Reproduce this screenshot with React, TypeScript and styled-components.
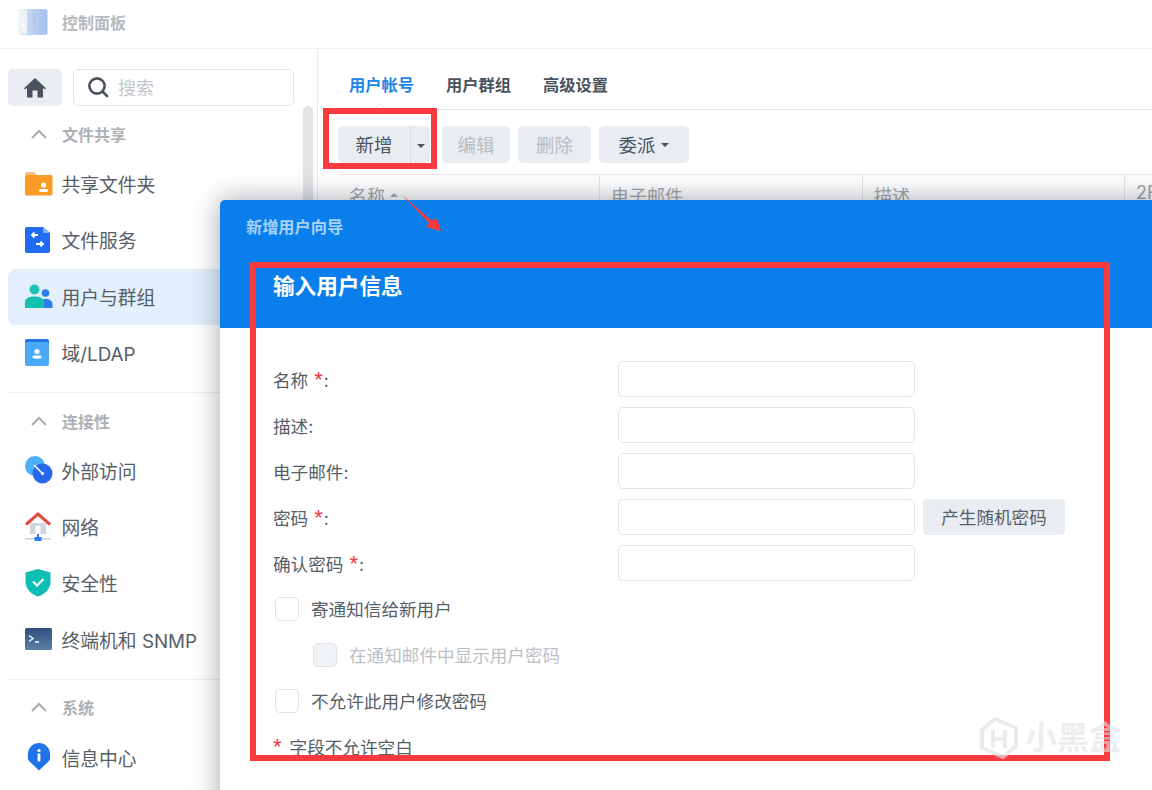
import styled, { createGlobalStyle } from "styled-components"

const GlobalStyle = createGlobalStyle`
  html, body {
    margin: 0;
    padding: 0;
    background: #fff;
  }
  * {
    box-sizing: border-box;
  }
`

const Page = styled.div`
  position: relative;
  width: 1152px;
  height: 790px;
  overflow: hidden;
  background: #fff;
  color: #4b535e;
  font-family: Inter, "Noto Sans CJK SC", "Noto Sans", sans-serif;
`

const TitleBar = styled.header`
  display: flex;
  align-items: center;
  gap: 14px;
  height: 49px;
  padding: 0 0 5px 18px;
  border-bottom: 1px solid #edeff2;
  font-size: 16px;
  font-weight: 700;
  color: #b6babf;
`

const Body = styled.div`
  display: flex;
  height: 741px;
`

const Sidebar = styled.aside`
  position: relative;
  flex: none;
  width: 318px;
  padding: 20px 23px 0 8px;
  border-right: 1px solid #e8ebee;
`

const ScrollThumb = styled.div`
  position: absolute;
  left: 303px;
  top: 57px;
  width: 10px;
  height: 300px;
  border-radius: 5px;
  background: #e2e3e5;
`

const SearchRow = styled.div`
  display: flex;
  gap: 11px;
  height: 37px;
  margin-bottom: 15px;
`

const HomeButton = styled.div`
  display: flex;
  align-items: center;
  justify-content: center;
  width: 54px;
  border-radius: 5px;
  background: #e9edf2;
`

const SearchBox = styled.div`
  flex: 1;
  display: flex;
  align-items: center;
  gap: 9px;
  padding: 0 0 1px 13px;
  border: 1px solid #e2e6ea;
  border-radius: 5px;
  font-size: 18px;
  color: #c2c6cb;
`

const SectionTitle = styled.div`
  display: flex;
  align-items: center;
  gap: 15px;
  height: 28px;
  margin-bottom: 7px;
  padding: 0 0 2px 23px;
  font-size: 16px;
  font-weight: 700;
  color: #adb1b6;
`

const NavItem = styled.div<{ $active?: boolean }>`
  display: flex;
  align-items: center;
  height: 56.3px;
  padding: 0 0 1px 17px;
  border-radius: 8px;
  font-size: 18.8px;
  white-space: nowrap;
  color: #565e68;
  background: ${(p) => (p.$active ? "#e3effc" : "transparent")};
`

const NavIcon = styled.span`
  display: flex;
  flex: none;
  width: 36.5px;
`

const Divider = styled.div`
  height: 1px;
  margin: 11px 0 14.5px;
  background: #eceef1;
`

const Main = styled.main`
  flex: 1;
  min-width: 0;
  padding-left: 19px;
`

const Tabs = styled.nav`
  position: relative;
  display: flex;
  align-items: center;
  gap: 32px;
  height: 61px;
  padding: 10px 0 0 12px;
  border-bottom: 1px solid #e3e6e9;
`

const Tab = styled.span<{ $active?: boolean }>`
  font-size: 16.25px;
  font-weight: 700;
  color: ${(p) => (p.$active ? "#1b86e8" : "#4b535e")};
`

const TabNotch = styled.span`
  position: absolute;
  left: 39px;
  bottom: -5px;
  width: 9px;
  height: 9px;
  background: #fff;
  border-left: 1px solid #e3e6e9;
  border-top: 1px solid #e3e6e9;
  transform: rotate(45deg);
`

const Toolbar = styled.div`
  display: flex;
  align-items: center;
  height: 37px;
  margin: 16px 0 11px 1px;
`

const SplitButton = styled.div`
  display: flex;
  width: 92px;
  height: 37px;
  margin-right: 12px;
  border-radius: 5px;
  background: #e9edf2;
`

const SplitLabel = styled.span`
  display: flex;
  align-items: center;
  justify-content: center;
  width: 73px;
  padding-bottom: 2px;
  border-right: 1px solid #d5d9de;
  font-size: 18.4px;
`

const SplitCaret = styled.span`
  flex: 1;
  display: flex;
  align-items: center;
  justify-content: center;
`

const ToolButton = styled.div<{ $width: number; $disabled?: boolean }>`
  display: flex;
  align-items: center;
  justify-content: center;
  gap: 6px;
  width: ${(p) => p.$width}px;
  height: 37px;
  margin-right: 8px;
  padding-bottom: 2px;
  border-radius: 5px;
  background: #e9edf2;
  font-size: 18.4px;
  color: ${(p) => (p.$disabled ? "#b7bcc2" : "#4b535e")};
`

const Caret = styled.i`
  display: block;
  width: 0;
  height: 0;
  margin-top: 2px;
  border-left: 4.5px solid transparent;
  border-right: 4.5px solid transparent;
  border-top: 4.5px solid #4b535e;
`

const TableHead = styled.div`
  display: grid;
  grid-template-columns: 262px 263px 262px 100px;
  height: 40px;
  margin-left: 1px;
  border-top: 1px solid #e8ebee;
`

const HeadCell = styled.div`
  display: flex;
  align-items: flex-start;
  gap: 5px;
  padding: 7px 0 0 11px;
  border-right: 1px solid #e3e6e9;
  font-size: 18px;
  color: #a2a6ab;
`

const SortCaret = styled.i`
  display: block;
  width: 0;
  height: 0;
  margin-top: 11px;
  border-left: 4.5px solid transparent;
  border-right: 4.5px solid transparent;
  border-bottom: 4.5px solid #a2a6ab;
`

const Wizard = styled.section`
  position: absolute;
  left: 220px;
  top: 200px;
  width: 960px;
  height: 620px;
  border-radius: 5px 0 0 0;
  background: #fff;
  box-shadow: 0 0 28px rgba(30, 40, 55, 0.42);
`

const WizardHeader = styled.div`
  height: 128px;
  padding: 15px 0 0 26px;
  border-radius: 5px 0 0 0;
  background: #0a7fec;
`

const WizardName = styled.div`
  font-size: 16.2px;
  font-weight: 700;
  line-height: 24px;
  color: #a8d2f9;
`

const WizardStep = styled.h2`
  margin: 32px 0 0 27px;
  font-size: 21.6px;
  font-weight: 700;
  line-height: 30px;
  color: #fff;
`

const Form = styled.div`
  display: flex;
  flex-direction: column;
  gap: 10px;
  padding: 33px 0 0 53px;
  font-size: 17.6px;
  color: #565e68;
`

const FieldRow = styled.div`
  display: flex;
  align-items: center;
  height: 36px;
`

const FieldLabel = styled.label`
  flex: none;
  width: 345px;
`

const Star = styled.span`
  margin: 0 1px 0 6px;
  font-family: "Liberation Sans", sans-serif;
  font-size: 22px;
  line-height: 0;
  color: #f0353f;
`

const TextBox = styled.div`
  flex: none;
  width: 297px;
  height: 36px;
  border: 1px solid #e2e6ea;
  border-radius: 5px;
`

const GhostButton = styled.div`
  display: flex;
  align-items: center;
  justify-content: center;
  width: 142px;
  height: 36px;
  margin-left: 8px;
  padding-bottom: 1px;
  border-radius: 4px;
  background: #e9edf2;
`

const CheckRow = styled.div<{ $indent?: boolean; $disabled?: boolean }>`
  display: flex;
  align-items: center;
  gap: 12px;
  height: 36px;
  padding-left: ${(p) => (p.$indent ? "40px" : "2px")};
  color: ${(p) => (p.$disabled ? "#bcc0c5" : "#565e68")};
`

const CheckBox = styled.span<{ $disabled?: boolean }>`
  flex: none;
  width: 24px;
  height: 24px;
  border: 1px solid #dfe3e8;
  border-radius: 5px;
  background: ${(p) => (p.$disabled ? "#f0f3f8" : "#fff")};
`

const CheckText = styled.span`
  margin-bottom: 2px;
`

const Hint = styled.div`
  margin-top: 6px;
  line-height: 26px;
`

const HintStar = styled.span`
  margin-right: 8px;
  font-family: "Liberation Sans", sans-serif;
  font-size: 22px;
  line-height: 0;
  color: #f0353f;
`

const RedFrame = styled.div<{ $x: number; $y: number; $w: number; $h: number }>`
  position: absolute;
  left: ${(p) => p.$x}px;
  top: ${(p) => p.$y}px;
  width: ${(p) => p.$w}px;
  height: ${(p) => p.$h}px;
  border: 6px solid #fb3a3f;
  pointer-events: none;
`

const ArrowMark = styled.svg`
  position: absolute;
  left: 395px;
  top: 190px;
`

const Watermark = styled.div`
  position: absolute;
  left: 979px;
  top: 716px;
  display: flex;
  align-items: center;
  gap: 6px;
  font-size: 32px;
  line-height: 44px;
  font-weight: 700;
  color: rgba(224, 226, 229, 0.6);
`

const ControlPanelIcon = () => (
  <svg width="30" height="28" viewBox="0 0 30 28">
    <defs>
      <linearGradient id="cp" x1="0" x2="1" y1="0" y2="0">
        <stop offset="0" stopColor="#e9edf3" />
        <stop offset="0.35" stopColor="#c4d6f4" />
        <stop offset="1" stopColor="#a4c0f0" />
      </linearGradient>
    </defs>
    <rect x="0.5" y="1" width="29" height="26" rx="2.5" fill="url(#cp)" />
    <rect x="1" y="2" width="8" height="24" fill="#eef1f5" />
    <g fill="#b3c6ea">
      <rect x="15" y="5" width="1.6" height="18" />
      <rect x="22" y="5" width="1.6" height="18" />
      <rect x="13.6" y="9" width="4.4" height="3" rx="1" />
      <rect x="20.6" y="15" width="4.4" height="3" rx="1" />
    </g>
    <circle cx="5" cy="17" r="2" fill="#fff" />
  </svg>
)

const HomeIcon = () => (
  <svg width="22" height="20" viewBox="0 0 22 20">
    <path
      fill="#4a5260"
      fillRule="evenodd"
      d="M11 0 22 10.2 20.9 11.4 19 9.7V19.5H3V9.7L1.1 11.4 0 10.2ZM8.5 12.5V19.5H13.5V12.5Z"
    />
  </svg>
)

const SearchIcon = () => (
  <svg width="22" height="22" viewBox="0 0 22 22" fill="none" stroke="#4a5260" strokeWidth="2.6">
    <circle cx="10" cy="10" r="7.6" />
    <path d="M15.5 15.5 20 20" strokeLinecap="round" />
  </svg>
)

const Chevron = () => (
  <svg width="16" height="10" viewBox="0 0 16 10" fill="none" stroke="#a9adb2" strokeWidth="2">
    <path d="M1 9 8 2 15 9" />
  </svg>
)

const FolderIcon = () => (
  <svg width="28" height="25" viewBox="0 0 28 25">
    <path fill="#fbc27d" d="M0 2.5A1.5 1.5 0 0 1 1.5 1H9l3 3H0Z" />
    <rect y="4" width="27.5" height="20.5" rx="1.5" fill="#fb9b25" />
    <circle cx="18.5" cy="14" r="2.6" fill="#fff" />
    <rect x="14" y="18" width="9" height="3" rx="1.4" fill="#fff" />
  </svg>
)

const FileServiceIcon = () => (
  <svg width="26" height="28" viewBox="0 0 26 28">
    <path fill="#1f6cf0" d="M2 1H18L25 7V25A2 2 0 0 1 23 27H2A2 2 0 0 1 0 25V3A2 2 0 0 1 2 1Z" />
    <path fill="#7fb2f8" d="M18 1 25 7H18Z" />
    <path
      d="M13 9H7M9.5 6.5 7 9 9.5 11.5M11 18H18M15.5 15.5 18 18 15.5 20.5"
      fill="none"
      stroke="#fff"
      strokeWidth="1.8"
    />
  </svg>
)

const UsersIcon = () => (
  <svg width="28" height="25" viewBox="0 0 28 25">
    <circle cx="20.5" cy="9" r="3.8" fill="#2f7bf0" />
    <path fill="#2f7bf0" d="M15 24V19C15 16.5 17.5 15 20.5 15 24.5 15 27.5 17 27.5 20V24Z" />
    <circle cx="9.5" cy="5.5" r="5" fill="#1fc3b4" />
    <path fill="#14bfae" d="M0 24V18C0 14.5 4 12.5 9.5 12.5 15 12.5 19 14.5 19 18V24Z" />
  </svg>
)

const DomainIcon = () => (
  <svg width="24" height="27" viewBox="0 0 24 27">
    <path fill="#1f74ea" d="M2 0H22A2 2 0 0 1 24 2V6H0V2A2 2 0 0 1 2 0Z" />
    <rect y="3" width="24" height="24" rx="2" fill="#4aaaf7" />
    <circle cx="12" cy="12.5" r="2.6" fill="#fff" />
    <rect x="7.5" y="16.5" width="9" height="3" rx="1.4" fill="#fff" />
  </svg>
)

const ExternalIcon = () => (
  <svg width="28" height="28" viewBox="0 0 28 28">
    <circle cx="10" cy="10" r="10" fill="#4bb0f8" />
    <circle cx="17.5" cy="17.5" r="10" fill="#2568ea" />
    <path d="M9 9 17.5 17.5" stroke="#fff" strokeWidth="1.6" />
    <circle cx="17.5" cy="17.5" r="1.6" fill="#fff" />
  </svg>
)

const NetworkIcon = () => (
  <svg width="26" height="30" viewBox="0 0 26 30">
    <path fill="#d0d6dd" d="M5 11H21V22H5Z" />
    <rect x="10.5" y="14" width="5" height="8" fill="#fff" />
    <path d="M1 12.5 13 2 25 12.5" fill="none" stroke="#df4b3f" strokeWidth="3" />
    <rect x="0" y="26" width="26" height="1.6" fill="#cfd5dc" />
    <path fill="#2f7bf0" d="M12 22H14V25H16.5V29H9.5V25H12Z" />
  </svg>
)

const ShieldIcon = () => (
  <svg width="26" height="28" viewBox="0 0 26 28">
    <path fill="#10bfb3" d="M13 0 25.5 3.5V13C25.5 20 20 25 13 27.5 6 25 .5 20 .5 13V3.5Z" />
    <path d="M8 12.5 12 16.5 18.5 10" fill="none" stroke="#fff" strokeWidth="2" />
  </svg>
)

const TerminalIcon = () => (
  <svg width="27" height="22" viewBox="0 0 27 22">
    <defs>
      <linearGradient id="term" x1="0" x2="0" y1="0" y2="1">
        <stop offset="0" stopColor="#2f4f7c" />
        <stop offset="1" stopColor="#5b7fa8" />
      </linearGradient>
    </defs>
    <rect width="27" height="22" rx="1.5" fill="url(#term)" />
    <path d="M4 7.5 8 10.5 4 13.5M10 14H14" fill="none" stroke="#fff" strokeWidth="1.3" />
  </svg>
)

const InfoIcon = () => (
  <svg width="28" height="28" viewBox="0 0 28 28">
    <path fill="#1f74ea" d="M14 27.5 4.5 18.5C2 16 3 13 3 11A11 11 0 0 1 25 11C25 13 26 16 23.5 18.5Z" />
    <circle cx="14" cy="7.5" r="1.6" fill="#fff" />
    <rect x="12.6" y="10.5" width="2.8" height="8" rx="1" fill="#fff" />
  </svg>
)

function App() {
  return (
    <Page>
      <GlobalStyle />
      <TitleBar>
        <ControlPanelIcon />
        控制面板
      </TitleBar>
      <Body>
        <Sidebar>
          <ScrollThumb />
          <SearchRow>
            <HomeButton>
              <HomeIcon />
            </HomeButton>
            <SearchBox>
              <SearchIcon />
              搜索
            </SearchBox>
          </SearchRow>
          <SectionTitle>
            <Chevron />
            文件共享
          </SectionTitle>
          <NavItem>
            <NavIcon><FolderIcon /></NavIcon>
            共享文件夹
          </NavItem>
          <NavItem>
            <NavIcon><FileServiceIcon /></NavIcon>
            文件服务
          </NavItem>
          <NavItem $active>
            <NavIcon><UsersIcon /></NavIcon>
            用户与群组
          </NavItem>
          <NavItem>
            <NavIcon><DomainIcon /></NavIcon>
            域/LDAP
          </NavItem>
          <Divider />
          <SectionTitle>
            <Chevron />
            连接性
          </SectionTitle>
          <NavItem>
            <NavIcon><ExternalIcon /></NavIcon>
            外部访问
          </NavItem>
          <NavItem>
            <NavIcon><NetworkIcon /></NavIcon>
            网络
          </NavItem>
          <NavItem>
            <NavIcon><ShieldIcon /></NavIcon>
            安全性
          </NavItem>
          <NavItem>
            <NavIcon><TerminalIcon /></NavIcon>
            终端机和 SNMP
          </NavItem>
          <Divider />
          <SectionTitle>
            <Chevron />
            系统
          </SectionTitle>
          <NavItem>
            <NavIcon><InfoIcon /></NavIcon>
            信息中心
          </NavItem>
        </Sidebar>
        <Main>
          <Tabs>
            <Tab $active>用户帐号</Tab>
            <Tab>用户群组</Tab>
            <Tab>高级设置</Tab>
            <TabNotch />
          </Tabs>
          <Toolbar>
            <SplitButton>
              <SplitLabel>新增</SplitLabel>
              <SplitCaret><Caret /></SplitCaret>
            </SplitButton>
            <ToolButton $width={68} $disabled>编辑</ToolButton>
            <ToolButton $width={73} $disabled>删除</ToolButton>
            <ToolButton $width={90}>委派 <Caret /></ToolButton>
          </Toolbar>
          <TableHead>
            <HeadCell>名称 <SortCaret /></HeadCell>
            <HeadCell>电子邮件</HeadCell>
            <HeadCell>描述</HeadCell>
            <HeadCell>2FA</HeadCell>
          </TableHead>
        </Main>
      </Body>
      <Wizard>
        <WizardHeader>
          <WizardName>新增用户向导</WizardName>
          <WizardStep>输入用户信息</WizardStep>
        </WizardHeader>
        <Form>
          <FieldRow>
            <FieldLabel>名称<Star>*</Star>:</FieldLabel>
            <TextBox />
          </FieldRow>
          <FieldRow>
            <FieldLabel>描述:</FieldLabel>
            <TextBox />
          </FieldRow>
          <FieldRow>
            <FieldLabel>电子邮件:</FieldLabel>
            <TextBox />
          </FieldRow>
          <FieldRow>
            <FieldLabel>密码<Star>*</Star>:</FieldLabel>
            <TextBox />
            <GhostButton>产生随机密码</GhostButton>
          </FieldRow>
          <FieldRow>
            <FieldLabel>确认密码<Star>*</Star>:</FieldLabel>
            <TextBox />
          </FieldRow>
          <CheckRow>
            <CheckBox />
            <CheckText>寄通知信给新用户</CheckText>
          </CheckRow>
          <CheckRow $indent $disabled>
            <CheckBox $disabled />
            <CheckText>在通知邮件中显示用户密码</CheckText>
          </CheckRow>
          <CheckRow>
            <CheckBox />
            <CheckText>不允许此用户修改密码</CheckText>
          </CheckRow>
          <Hint><HintStar>*</HintStar>字段不允许空白</Hint>
        </Form>
      </Wizard>
      <RedFrame $x={323} $y={108} $w={114} $h={61} />
      <RedFrame $x={250} $y={262} $w={860} $h={499} />
      <ArrowMark width="50" height="45" viewBox="0 0 50 45">
        <path fill="#fb3a3f" d="M7 5 36 30 42 29 46 41 31 37 34 33Z" />
      </ArrowMark>
      <Watermark>
        <svg width="40" height="44" viewBox="0 0 40 44" fill="none" stroke="rgba(224,226,229,0.7)" strokeWidth="4">
          <path d="M3 14 16 3 37 12V30L24 41 3 32Z" />
          <path d="M14 14V32M26 14V32M14 23H26" />
        </svg>
        小黑盒
      </Watermark>
    </Page>
  )
}

export default App
